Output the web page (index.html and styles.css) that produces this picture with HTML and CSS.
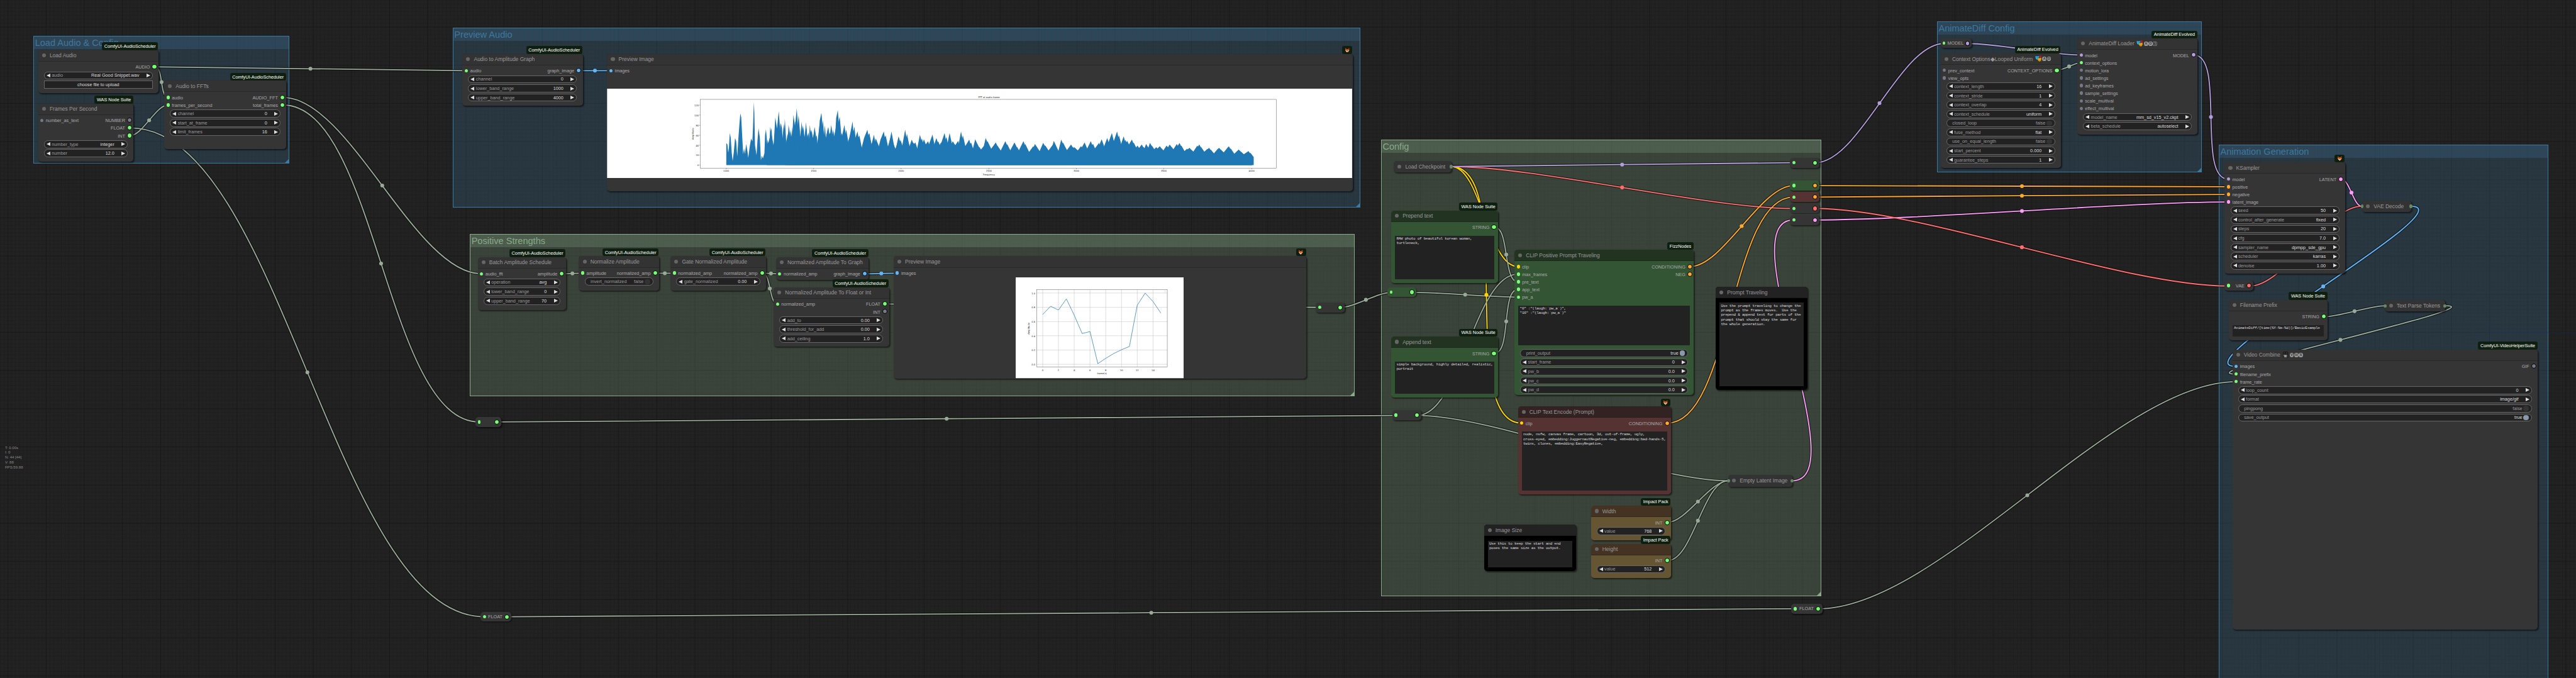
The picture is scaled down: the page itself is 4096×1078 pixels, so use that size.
FILE: index.html
```
<!DOCTYPE html>
<html lang="en">
<head>
<meta charset="utf-8">
<title>ComfyUI</title>
<link rel="stylesheet" href="styles.css">
</head>
<body>
<svg class="defs" aria-hidden="true">
  <symbol id="fox" viewBox="0 0 16 16">
    <path d="M2 0.5L6 4.5H10L14 0.5L14.5 8L8 15.5L1.5 8Z" fill="#e8590c"/>
    <path d="M2.8 2L5 4.8L3.2 6ZM13.2 2L11 4.8L12.8 6Z" fill="#5b2a16"/>
    <path d="M1.5 8L6.4 9.6L8 13.5L9.6 9.6L14.5 8L8 15.7Z" fill="#fff"/>
    <path d="M6.8 13.3H9.2L8 15.8ZM4.8 7.6H6.2V8.8H4.8ZM9.8 7.6H11.2V8.8H9.8Z" fill="#222"/>
  </symbol>
  <symbol id="masks" viewBox="0 0 18 18">
    <path d="M10 1.5L17 0.5V10L12 12Z" fill="#c0182b"/>
    <path d="M0.5 1Q5.500 3 11 1V8Q10 12.500 6 13Q1.500 12 0.500 7Z" fill="#29b6f6" stroke="#000" stroke-width=".6"/>
    <path d="M7 6.500Q11.500 8.500 17.300 6V12Q16.500 16.500 12.500 17.300Q8 16.500 7 12Z" fill="#fdb913" stroke="#000" stroke-width=".6"/>
    <path d="M3 5H5M7 5H9M9.500 10H11.300M13.500 10H15.300M10 13Q12.500 15.500 15 13" stroke="#222" stroke-width=".9" fill="none"/>
  </symbol>
  <symbol id="camera" viewBox="0 0 18 18">
    <circle cx="6" cy="4" r="3.500" fill="#333" stroke="#000"/><circle cx="12" cy="4" r="3.500" fill="#333" stroke="#000"/>
    <path d="M2 8H14V17H4V12H2Z" fill="#777" stroke="#000"/><path d="M14 9H17V15H14Z" fill="#555" stroke="#000"/>
    <path d="M6 11H11M6 14H11" stroke="#ddd"/><circle cx="13" cy="10" r="1" fill="#d33"/>
  </symbol>
</svg>

<main class="graph">
  <section class="group blue g-load"><h2>Load Audio &amp; Config</h2></section>
  <section class="group blue g-preview"><h2>Preview Audio</h2></section>
  <section class="group green g-strengths"><h2>Positive Strengths</h2></section>
  <section class="group green g-config"><h2>Config</h2></section>
  <section class="group blue g-animdiff"><h2>AnimateDiff Config</h2></section>
  <section class="group blue g-generation"><h2>Animation Generation</h2></section>

  <svg class="links" viewBox="0 0 6746 1775">
    <defs>
      <g id="wires">
        <path class="data" d="M406 175C610 175 1017 185 1221 185"/>
        <path class="data" d="M406 175C428 175 418 255 440 255"/>
        <path class="data" d="M341 355C373 355 408 275 440 275"/>
        <path class="data" d="M341 335C736 335 874 1615 1269 1615"/>
        <path class="data" d="M741 255C915 255 1087 717 1261 717"/>
        <path class="data" d="M741 275C985 275 1011 1105 1255 1105"/>
        <path class="data" d="M1303 1105C1889 1105 3069 1088 3655 1088"/>
        <path class="data" d="M1330 1615C2172 1615 3859 1594 4701 1594"/>
        <path class="data" d="M4763 1594C5077 1594 5541 999.500 5855 999.500"/>
        <path class="data" d="M1472 717C1485 717 1513 715.500 1526 715.500"/>
        <path class="data" d="M1717 715.500H1766"/>
        <path class="data" d="M1997 715.500C2008 715.500 2030 717 2041 717"/>
        <path class="data" d="M1997 715.500C2019 715.500 2014 796 2036 796"/>
        <path class="data" d="M2319 796C2603 796 3171 805 3455 805"/>
        <path class="data" d="M3511 805C3545 805 3609 765.500 3643 765.500"/>
        <path class="clip" d="M3800 436C3879 436 3896 698 3975 698"/>
        <path class="clip" d="M3800 436C3974 436 3811 1108 3985 1108"/>
        <path class="vae" d="M3800 436C4026 436 4471 546 4697 546"/>
        <path class="model" d="M3800 436C4024 436 4473 426 4697 426"/>
        <path class="data" d="M3699 765.500C3768 765.500 3906 778 3975 778"/>
        <path class="data" d="M3914 595C3953 595 3936 738 3975 738"/>
        <path class="data" d="M3914 925C3958 925 3931 758 3975 758"/>
        <path class="data" d="M3711 1088C3825 1088 3861 718 3975 718"/>
        <path class="data" d="M3711 1088C3919 1088 4318 1259 4526 1259"/>
        <path class="data" d="M4367 1368C4415 1368 4478 1259 4526 1259"/>
        <path class="data" d="M4367 1468C4433 1468 4460 1259 4526 1259"/>
        <path class="cond" d="M4426 698C4512 698 4611 486 4697 486"/>
        <path class="cond" d="M4366 1108C4535 1108 4528 516 4697 516"/>
        <path class="latent" d="M4693 1259C4864 1259 4526 576 4697 576"/>
        <path class="cond" d="M4754 486C5025 486 5565 489 5835 489"/>
        <path class="cond" d="M4754 516C5025 516 5565 509 5835 509"/>
        <path class="latent" d="M4754 576C5025 576 5565 529 5835 529"/>
        <path class="vae" d="M4754 546C5030 546 5559 749 5835 749"/>
        <path class="model" d="M4754 426C4869 426 4976 114 5091 114"/>
        <path class="model" d="M5155 114C5229 114 5375 144 5449 144"/>
        <path class="data" d="M5388 184C5404 184 5433 164 5449 164"/>
        <path class="model" d="M5745 144C5829 144 5751 469 5835 469"/>
        <path class="latent" d="M6131 469C6153 469 6163 540 6185 540"/>
        <path class="vae" d="M5892 749C5982 749 6095 540 6185 540"/>
        <path class="image" d="M6313 540C6468 540 5700 959.500 5855 959.500"/>
        <path class="data" d="M6086 829.500C6127 829.500 6205 800.500 6246 800.500"/>
        <path class="data" d="M6403 800.500C6547 800.500 5711 979.500 5855 979.500"/>
        <path class="image" d="M1516 185H1600"/>
        <path class="image" d="M2266 717C2287 717 2329 715.500 2350 715.500"/>
      </g>
    </defs>
    <use href="#wires" class="shade"/>
    <use href="#wires"/>
    <g class="data">
      <circle cx="813" cy="180" r="5"/><circle cx="423" cy="215" r="5"/><circle cx="390.500" cy="315" r="5"/><circle cx="805" cy="975" r="5"/>
      <circle cx="1001" cy="486" r="5"/><circle cx="998" cy="690" r="5"/><circle cx="2479" cy="1096.500" r="5"/><circle cx="3015" cy="1604.500" r="5"/>
      <circle cx="5309" cy="1297" r="5"/><circle cx="1499" cy="716" r="5"/><circle cx="1741" cy="715.500" r="5"/><circle cx="2019" cy="716" r="5"/>
      <circle cx="2016" cy="755.500" r="5"/><circle cx="3577" cy="785" r="5"/><circle cx="3837" cy="771.500" r="5"/><circle cx="3944.500" cy="666.500" r="5"/>
      <circle cx="3944.500" cy="841.500" r="5"/><circle cx="4446.500" cy="1313.500" r="5"/><circle cx="4446.500" cy="1363.500" r="5"/>
      <circle cx="5418.500" cy="174" r="5"/><circle cx="6166" cy="815" r="5"/><circle cx="6129" cy="890" r="5"/>
    </g>
    <g class="cond"><circle cx="4561" cy="592" r="5"/><circle cx="5295" cy="487.500" r="5"/><circle cx="5295" cy="512.500" r="5"/></g>
    <g class="clip"><circle cx="3892.500" cy="772" r="5"/></g>
    <g class="vae"><circle cx="4248" cy="491" r="5"/><circle cx="5295" cy="647.500" r="5"/></g>
    <g class="latent"><circle cx="5295" cy="552.500" r="5"/><circle cx="6158" cy="504.500" r="5"/></g>
    <g class="model"><circle cx="4248" cy="431" r="5"/><circle cx="4922" cy="270" r="5"/><circle cx="5790" cy="306.500" r="5"/></g>
    <g class="image"><circle cx="1558" cy="185" r="5"/><circle cx="2308" cy="716" r="5"/><circle cx="6084" cy="750" r="5"/></g>
    <path class="axis" d="M6746 871H6521V915"/>
  </svg>

  <article class="node n-load-audio"><em class="badge">ComfyUI-AudioScheduler</em><h3>Load Audio</h3>
    <div class="slots"><ul class="in"></ul><ul class="out"><li>AUDIO</li></ul></div>
    <div class="widgets"><div class="widget"><span>audio</span><b>Real Good Snippet.wav</b></div><div class="button">choose file to upload</div></div>
  </article>
  <article class="node n-fps"><em class="badge">WAS Node Suite</em><h3>Frames Per Second</h3>
    <div class="slots"><ul class="in"><li class="idle">number_as_text</li></ul><ul class="out"><li class="idle">NUMBER</li><li>FLOAT</li><li>INT</li></ul></div>
    <div class="widgets"><div class="widget"><span>number_type</span><b>integer</b></div><div class="widget"><span>number</span><b>12.0</b></div></div>
  </article>
  <article class="node n-fft"><em class="badge">ComfyUI-AudioScheduler</em><h3>Audio to FFTs</h3>
    <div class="slots"><ul class="in"><li>audio</li><li>frames_per_second</li></ul><ul class="out"><li>AUDIO_FFT</li><li>total_frames</li></ul></div>
    <div class="widgets"><div class="widget"><span>channel</span><b>0</b></div><div class="widget"><span>start_at_frame</span><b>0</b></div><div class="widget"><span>limit_frames</span><b>16</b></div></div>
  </article>

  <article class="node n-amp-graph"><em class="badge">ComfyUI-AudioScheduler</em><h3>Audio to Amplitude Graph</h3>
    <div class="slots"><ul class="in"><li>audio</li></ul><ul class="out"><li class="image">graph_image</li></ul></div>
    <div class="widgets"><div class="widget"><span>channel</span><b>0</b></div><div class="widget"><span>lower_band_range</span><b>1000</b></div><div class="widget"><span>upper_band_range</span><b>4000</b></div></div>
  </article>
  <article class="node n-preview-audio"><em class="badge"><svg class="fox"><use href="#fox"/></svg></em><h3>Preview Image</h3>
    <div class="slots"><ul class="in"><li class="image">images</li></ul></div>
    <svg class="plot wide" viewBox="0 0 1951 234">
      <rect width="1951" height="234" fill="#fff"/>
      <path class="area" transform="translate(-430 -182.300) scale(.574 .3333)" d="M1293 1147V975L1298 985L1302 1050L1305 1010L1309 895L1313 930L1318 1055L1322 1115L1327 1050L1333 935L1338 960L1343 1080L1348 940L1353 825L1357 742L1361 770L1365 900L1370 1062L1374 1015L1378 1060L1384 980L1390 1045L1393 1090L1400 1000L1406 940L1412 960L1415 850L1417 730L1419 655L1421 740L1424 990L1431 1070L1435 960L1440 858L1446 930L1451 1110L1455 1075L1460 1095L1467 1055L1470 910L1474 866L1480 985L1486 965L1492 925L1499 855L1505 1010L1511 970L1517 990L1522 905L1527 1000L1533 990L1539 840L1542 818L1547 860L1552 1000L1556 920L1560 783L1565 920L1568 1147Z"/>
      <g id="spectrum"><path class="area" transform="translate(-1590 -232.300) scale(4.3023)" d="M478 100.500L478.400 84L479.500 90L480 76L481 82L482 88L483 70L484 77L485 66L486 80L487 85L488 74L489 88L490 82L491 78L492 90L493 76L494 86L496 80L497 92L499 75L500 84L501 73L502 88L504 78L505 84L506 76L508 90L509 72L510 67L511 80L512 86L514 76L516 90L517 84L519 74L520 86L522 80L524 92L526 84L528 79L530 90L532 82L534 93L536 85L538 80L540 91L542 84L545 92L547 83L549 90L551 79L553 91L555 85L558 92L560 82L562 90L565 86L567 93L570 84L572 90L575 81L577 92L580 86L583 91L585 80L587 90L590 85L592 92L595 88L598 93L600 84L603 91L606 87L609 92L612 86L615 93L618 88L620 92L623 86L626 93L629 89L632 94L635 87L638 92L641 88L644 93L646 85L649 92L652 88L655 93L658 89L661 92L664 86L666 91L669 87L671 92L674 84L676 90L678 86L680 80L682 89L684 83L686 90L689 85L692 92L695 88L698 93L700 87L703 92L706 89L709 93L712 88L715 92L718 87L721 93L724 90L727 93L730 88L733 93L736 90L739 94L742 90L745 93L748 89L751 94L754 91L757 94L760 92L762 95V100.500Z"/></g>
      <use href="#spectrum" transform="translate(5 24) scale(1 .88)"/>
      <use href="#spectrum" transform="translate(-67 10) scale(1.04 .95)"/>
      <rect class="frame" x="244" y="28" width="1509" height="180"/>
      <path class="frame" d="M312 208v3M541 208v3M770 208v3M1000 208v3M1229 208v3M1458 208v3M1688 208v3M244 200h-3M244 174h-3M244 148h-3M244 122h-3M244 96h-3M244 69h-3M244 43h-3"/>
      <g class="ticks mid"><text x="312" y="218">1000</text><text x="541" y="218">1500</text><text x="770" y="218">2000</text><text x="1000" y="218">2500</text><text x="1229" y="218">3000</text><text x="1458" y="218">3500</text><text x="1688" y="218">4000</text><text x="1000" y="227">Frequency</text><text x="1000" y="25">FFT of audio frame</text></g>
      <g class="ticks end"><text x="240" y="203">0</text><text x="240" y="177">20</text><text x="240" y="151">40</text><text x="240" y="125">60</text><text x="240" y="99">80</text><text x="240" y="72">100</text><text x="240" y="46">120</text></g>
      <text class="ticks mid" transform="translate(227 118) rotate(-90)">Amplitude</text>
    </svg>
  </article>

  <article class="node n-batch"><em class="badge">ComfyUI-AudioScheduler</em><h3>Batch Amplitude Schedule</h3>
    <div class="slots"><ul class="in"><li>audio_fft</li></ul><ul class="out"><li>amplitude</li></ul></div>
    <div class="widgets"><div class="widget"><span>operation</span><b>avg</b></div><div class="widget"><span>lower_band_range</span><b>0</b></div><div class="widget"><span>upper_band_range</span><b>70</b></div></div>
  </article>
  <article class="node n-normalize"><em class="badge">ComfyUI-AudioScheduler</em><h3>Normalize Amplitude</h3>
    <div class="slots"><ul class="in"><li>amplitude</li></ul><ul class="out"><li>normalized_amp</li></ul></div>
    <div class="widgets"><div class="toggle"><span>invert_normalized</span><b>false</b></div></div>
  </article>
  <article class="node n-gate"><em class="badge">ComfyUI-AudioScheduler</em><h3>Gate Normalized Amplitude</h3>
    <div class="slots"><ul class="in"><li>normalized_amp</li></ul><ul class="out"><li>normalized_amp</li></ul></div>
    <div class="widgets"><div class="widget"><span>gate_normalized</span><b>0.00</b></div></div>
  </article>
  <article class="node n-to-graph"><em class="badge">ComfyUI-AudioScheduler</em><h3>Normalized Amplitude To Graph</h3>
    <div class="slots"><ul class="in"><li>normalized_amp</li></ul><ul class="out"><li class="image">graph_image</li></ul></div>
  </article>
  <article class="node n-to-float"><em class="badge">ComfyUI-AudioScheduler</em><h3>Normalized Amplitude To Float or Int</h3>
    <div class="slots"><ul class="in"><li>normalized_amp</li></ul><ul class="out"><li>FLOAT</li><li class="idle">INT</li></ul></div>
    <div class="widgets"><div class="widget"><span>add_to</span><b>0.00</b></div><div class="widget"><span>threshold_for_add</span><b>0.00</b></div><div class="widget"><span>add_ceiling</span><b>1.0</b></div></div>
  </article>
  <article class="node n-preview-amp"><em class="badge"><svg class="fox"><use href="#fox"/></svg></em><h3>Preview Image</h3>
    <div class="slots"><ul class="in"><li class="image">images</li></ul></div>
    <svg class="plot small" viewBox="0 0 440 264">
      <rect width="440" height="264" fill="#fff"/>
      <path class="gridline" d="M70.800 32V235M112 32V235M153.300 32V235M194.600 32V235M235.900 32V235M277.200 32V235M318.400 32V235M359.700 32V235M55 41H397M55 78.500H397M55 116H397M55 153H397M55 190.500H397M55 227.600H397"/>
      <path class="line" d="M70.800 97L91.400 75.700L112 85.500L132.700 56.500L153.300 99L174 147L194.600 142L215.200 226L235.900 212L256.500 199.600L277.200 189.500L297.800 181L318.400 73L339.100 41.200L359.700 63.600L380.300 93.500"/>
      <rect class="frame" x="55" y="32" width="342" height="203"/>
      <rect x="389" y="35" width="4" height="6" fill="none" stroke="#ddd" stroke-width=".7"/>
      <g class="ticks mid"><text x="70.800" y="245">0</text><text x="112" y="245">2</text><text x="153.300" y="245">4</text><text x="194.600" y="245">6</text><text x="235.900" y="245">8</text><text x="277.200" y="245">10</text><text x="318.400" y="245">12</text><text x="359.700" y="245">14</text><text x="226" y="254">frame(s)</text></g>
      <g class="ticks end"><text x="51" y="44">1.0</text><text x="51" y="81.500">0.8</text><text x="51" y="119">0.6</text><text x="51" y="156">0.4</text><text x="51" y="193.500">0.2</text><text x="51" y="230.600">0.0</text></g>
      <text class="ticks mid" transform="translate(37 134) rotate(-90)">Amplitude</text>
    </svg>
  </article>

  <div class="reroute r-strength"></div>
  <div class="reroute r-frames"></div>
  <div class="reroute wide-label r-float-left">FLOAT</div>
  <div class="reroute wide-label r-float-right">FLOAT</div>
  <div class="reroute tint-green r-pw"></div>
  <div class="reroute r-max"></div>
  <div class="reroute r-model"></div>
  <div class="reroute tint-green cond r-positive"></div>
  <div class="reroute tint-red cond r-negative"></div>
  <div class="reroute vae r-vae"></div>
  <div class="reroute latent r-latent"></div>
  <div class="reroute wide-label model r-ad-model">MODEL</div>
  <div class="reroute wide-label vae r-vae-in">VAE</div>

  <article class="node collapsed n-checkpoint"><h3>Load Checkpoint</h3></article>
  <article class="node tint-green n-prepend"><em class="badge">WAS Node Suite</em><h3>Prepend text</h3>
    <div class="slots"><ul class="in"></ul><ul class="out"><li>STRING</li></ul></div>
    <p class="text">RAW photo of beautiful korean woman,
turtleneck,</p>
  </article>
  <article class="node tint-green n-append"><em class="badge">WAS Node Suite</em><h3>Append text</h3>
    <div class="slots"><ul class="in"></ul><ul class="out"><li>STRING</li></ul></div>
    <p class="text">simple background, highly detailed, realistic,
portrait</p>
  </article>
  <article class="node tint-green n-travel"><em class="badge">FizzNodes</em><h3>CLIP Positive Prompt Traveling</h3>
    <div class="slots"><ul class="in"><li class="clip">clip</li><li>max_frames</li><li>pre_text</li><li>app_text</li><li>pw_a</li></ul><ul class="out"><li class="cond">CONDITIONING</li><li class="cond">NEG</li></ul></div>
    <p class="text">"0" :"(laugh:`pw_a`)",
"16" :"(laugh:`pw_a`)"</p>
    <div class="widgets"><div class="toggle on"><span>print_output</span><b>true</b></div><div class="widget"><span>start_frame</span><b>0</b></div><div class="widget"><span>pw_b</span><b>0.0</b></div><div class="widget"><span>pw_c</span><b>0.0</b></div><div class="widget"><span>pw_d</span><b>0.0</b></div></div>
  </article>
  <article class="node note n-note-travel"><h3>Prompt Traveling</h3>
    <p class="text">Use the prompt traveling to change the
prompt as the frames moves.  Use the
prepend &amp; append text for parts of the
prompt that should stay the same for
the whole generation.</p>
  </article>
  <article class="node tint-red n-encode"><em class="badge"><svg class="fox"><use href="#fox"/></svg></em><h3>CLIP Text Encode (Prompt)</h3>
    <div class="slots"><ul class="in"><li class="clip">clip</li></ul><ul class="out"><li class="cond">CONDITIONING</li></ul></div>
    <p class="text">nude, nsfw, canvas frame, cartoon, 3d, out-of-frame, ugly,
cross-eyed, embedding:JuggernautNegative-neg, embedding:bad-hands-5,
twins, clones, embedding:EasyNegative,</p>
  </article>
  <article class="node tint-brown n-width"><em class="badge">Impact Pack</em><h3>Width</h3>
    <div class="slots"><ul class="in"></ul><ul class="out"><li>INT</li></ul></div>
    <div class="widgets"><div class="widget"><span>value</span><b>768</b></div></div>
  </article>
  <article class="node tint-brown n-height"><em class="badge">Impact Pack</em><h3>Height</h3>
    <div class="slots"><ul class="in"></ul><ul class="out"><li>INT</li></ul></div>
    <div class="widgets"><div class="widget"><span>value</span><b>512</b></div></div>
  </article>
  <article class="node note n-note-size"><h3>Image Size</h3>
    <p class="text">Use this to keep the start and end
poses the same size as the output.</p>
  </article>
  <article class="node collapsed both n-latent"><h3>Empty Latent Image</h3></article>

  <article class="node n-context"><em class="badge">AnimateDiff Evolved</em><h3>Context Options◆Looped Uniform <svg class="emoji"><use href="#masks"/></svg><i>A</i><i>D</i></h3>
    <div class="slots"><ul class="in"><li class="idle">prev_context</li><li class="idle">view_opts</li></ul><ul class="out"><li>CONTEXT_OPTIONS</li></ul></div>
    <div class="widgets"><div class="widget"><span>context_length</span><b>16</b></div><div class="widget"><span>context_stride</span><b>1</b></div><div class="widget"><span>context_overlap</span><b>4</b></div><div class="widget"><span>context_schedule</span><b>uniform</b></div><div class="toggle"><span>closed_loop</span><b>false</b></div><div class="widget"><span>fuse_method</span><b>flat</b></div><div class="toggle"><span>use_on_equal_length</span><b>false</b></div><div class="widget"><span>start_percent</span><b>0.000</b></div><div class="widget"><span>guarantee_steps</span><b>1</b></div></div>
  </article>
  <article class="node n-loader"><em class="badge">AnimateDiff Evolved</em><h3>AnimateDiff Loader <svg class="emoji"><use href="#masks"/></svg><i>A</i><i>D</i><i class="hollow">1</i></h3>
    <div class="slots"><ul class="in"><li class="model">model</li><li>context_options</li><li class="idle">motion_lora</li><li class="idle">ad_settings</li><li class="idle">ad_keyframes</li><li class="idle">sample_settings</li><li class="idle">scale_multival</li><li class="idle">effect_multival</li></ul><ul class="out"><li class="model">MODEL</li></ul></div>
    <div class="widgets"><div class="widget"><span>model_name</span><b>mm_sd_v15_v2.ckpt</b></div><div class="widget"><span>beta_schedule</span><b>autoselect</b></div></div>
  </article>

  <article class="node n-ksampler"><em class="badge"><svg class="fox"><use href="#fox"/></svg></em><h3>KSampler</h3>
    <div class="slots"><ul class="in"><li class="model">model</li><li class="cond">positive</li><li class="cond">negative</li><li class="latent">latent_image</li></ul><ul class="out"><li class="latent">LATENT</li></ul></div>
    <div class="widgets"><div class="widget"><span>seed</span><b>50</b></div><div class="widget"><span>control_after_generate</span><b>fixed</b></div><div class="widget"><span>steps</span><b>20</b></div><div class="widget"><span>cfg</span><b>7.0</b></div><div class="widget"><span>sampler_name</span><b>dpmpp_sde_gpu</b></div><div class="widget"><span>scheduler</span><b>karras</b></div><div class="widget"><span>denoise</span><b>1.00</b></div></div>
  </article>
  <article class="node collapsed both n-decode"><h3>VAE Decode</h3></article>
  <article class="node n-prefix"><em class="badge">WAS Node Suite</em><h3>Filename Prefix</h3>
    <div class="slots"><ul class="in"></ul><ul class="out"><li>STRING</li></ul></div>
    <p class="text">AnimateDiff/[time(%Y-%m-%d)]/BasicExample</p>
  </article>
  <article class="node collapsed both n-tokens"><h3>Text Parse Tokens</h3></article>
  <article class="node n-video"><em class="badge">ComfyUI-VideoHelperSuite</em><h3>Video Combine <svg class="emoji"><use href="#camera"/></svg><i>V</i><i>H</i><i>S</i></h3>
    <div class="slots"><ul class="in"><li class="image">images</li><li>filename_prefix</li><li>frame_rate</li></ul><ul class="out"><li class="idle">GIF</li></ul></div>
    <div class="widgets"><div class="widget"><span>loop_count</span><b>0</b></div><div class="widget"><span>format</span><b>image/gif</b></div><div class="toggle"><span>pingpong</span><b>false</b></div><div class="toggle on"><span>save_output</span><b>true</b></div></div>
  </article>

  <pre class="stats">T: 0.00s
I: 0
N: 44 [44]
V: 88
FPS:59.88</pre>
</main>
</body>
</html>
```
FILE: styles.css
```
* { box-sizing: border-box; }

html, body {
  margin: 0;
  width: 100%;
  height: 100%;
  overflow: hidden;
  background: #222;
}

ul, h2, h3, p, pre { margin: 0; padding: 0; font-weight: normal; }
ul { list-style: none; }
.defs { position: absolute; width: 0; height: 0; }

/* canvas: world units are pixels, the whole view is zoomed out */
.graph {
  position: relative;
  width: 6745px;
  height: 1775px;
  overflow: hidden;
  zoom: .60718;
  font: 12px "Liberation Sans", Arial, sans-serif;
  color: #aaa;
  background-color: #222;
  background-image:
    linear-gradient(#191919 2px, transparent 2px),
    linear-gradient(90deg, #191919 2px, transparent 2px),
    linear-gradient(#1e1e1e 1px, transparent 1px),
    linear-gradient(90deg, #1e1e1e 1px, transparent 1px);
  background-size: 100px 100px, 100px 100px, 10px 10px, 10px 10px;
  background-position: 0 70px, 20px 0, 0 0, 0 0;
}

/* socket and wire colours */
.graph, .data { --c: #9a9; --dot: #7f7; }
.idle { --dot: #778; }
.image { --c: #64b5f6; --dot: #64b5f6; }
.clip { --c: #ffd500; --dot: #ffd500; }
.cond { --c: #ffa931; --dot: #ffa931; }
.latent { --c: #ff9cf9; --dot: #ff9cf9; }
.model { --c: #b39ddb; --dot: #b39ddb; }
.vae { --c: #ff6e6e; --dot: #ff6e6e; }

/* groups */
.group {
  position: absolute;
  border: 1px solid var(--g);
  color: var(--g);
}
.group.blue { --g: #3f789e; --fill: rgba(63, 120, 158, .25); }
.group.green { --g: #8a8; --fill: rgba(136, 170, 136, .25); }
.group { background: var(--fill); }
.group h2 {
  height: 33px;
  padding: 3px 0 0 3px;
  background: var(--fill);
  font-size: 24px;
  line-height: 27px;
}
.group::after {
  content: "";
  position: absolute;
  right: 0;
  bottom: 0;
  border: 5px solid var(--g);
  border-top-color: transparent;
  border-left-color: transparent;
}
.g-load { left: 87px; top: 94px; width: 671px; height: 335px; }
.g-preview { left: 1185px; top: 72px; width: 2378px; height: 471px; }
.g-strengths { left: 1230px; top: 613px; width: 2318px; height: 425px; }
.g-config { left: 3616px; top: 366px; width: 1153px; height: 1195px; }
.g-animdiff { left: 5072px; top: 56px; width: 694px; height: 395px; }
.g-generation { left: 5810px; top: 379px; width: 863px; height: 1396px; border-bottom: 0; }
.g-generation::after { display: none; }

/* wires */
.links { position: absolute; left: 0; top: 0; width: 6746px; height: 1775px; }
.links path { fill: none; stroke: var(--shade, var(--c)); stroke-width: var(--w, 3px); }
.links circle { fill: var(--c); }
.links .shade { --shade: rgba(0, 0, 0, .5); --w: 7px; }
.links .axis { stroke: rgba(35, 60, 110, .7); stroke-width: 1px; }

/* nodes */
.node {
  --head: #333;
  --body: #353535;
  position: absolute;
  display: flex;
  flex-direction: column;
  border-radius: 8px;
  background: var(--body);
  box-shadow: 2px 2px 3px rgba(0, 0, 0, .5);
}
.tint-green { --head: #232; --body: #353; }
.tint-red { --head: #322; --body: #533; }
.tint-brown { --head: #432; --body: #653; }
.note { --head: #222; --body: #000; }

.node h3 {
  display: flex;
  flex: none;
  align-items: center;
  height: 30px;
  padding-left: 10px;
  border-radius: 8px 8px 0 0;
  border-bottom: 1px solid rgba(0, 0, 0, .2);
  background: var(--head);
  color: #999;
  font-size: 14px;
  white-space: pre;
}
.node h3::before {
  content: "";
  width: 10px;
  height: 10px;
  margin-right: 10px;
  border-radius: 50%;
  background: #666;
}
.node h3 i {
  width: 11px;
  height: 11px;
  margin-left: 1px;
  border-radius: 50%;
  background: #999;
  color: #333;
  font: bold 9px/11px "Liberation Sans", Arial, sans-serif;
  text-align: center;
}
.node h3 i.hollow { background: none; color: #999; box-shadow: inset 0 0 0 1px #999; }
.emoji { width: 17px; height: 17px; margin: 0 1px 0 2px; }

.badge {
  position: absolute;
  right: 1px;
  top: -20px;
  display: flex;
  align-items: center;
  height: 20px;
  padding: 0 6px;
  border-radius: 5px;
  background: #0f1f0f;
  color: #fff;
  font-style: normal;
  white-space: nowrap;
}
.fox { width: 14px; height: 13px; }

.slots { display: flex; flex: none; justify-content: space-between; padding-top: 4px; }
.slots li {
  display: flex;
  align-items: center;
  height: 20px;
  padding: 2px 6px 0;
  gap: 6px;
}
.slots li::before {
  content: "";
  width: 8px;
  height: 9px;
  margin-top: -2px;
  border-radius: 50%;
  background: var(--dot);
}
.out li { flex-direction: row-reverse; padding-right: 4px; gap: 5px; }
.out li::before { width: 10px; height: 10px; border: 1px solid #000; }

.widgets { display: flex; flex-direction: column; gap: 4px; margin: 2px 15px 0; }
.widget, .toggle, .button {
  display: flex;
  align-items: center;
  height: 21px;
  margin-bottom: -1px;
  border: 1px solid #666;
  background: #222;
  color: #999;
}
.widget, .toggle { border-radius: 10.5px; padding: 0 5px; }
.widget span, .toggle span { flex: 1; }
.widget b, .toggle b, .button { font-weight: normal; color: #ddd; }
.widget::before, .widget::after {
  content: "";
  border: 5px solid transparent;
  border-right: 10px solid #ddd;
  border-left: 0;
  margin-right: 4px;
}
.widget::after {
  border-left: 10px solid #ddd;
  border-right: 0;
  margin: 0 0 0 19px;
}
.toggle { padding: 0 7px 0 14px; }
.toggle b { color: #999; }
.toggle::after {
  content: "";
  width: 14px;
  height: 14px;
  margin-left: 3px;
  border-radius: 50%;
  background: #333;
}
.toggle.on b { color: #ddd; }
.toggle.on::after { background: #89a; }
.button { justify-content: center; }

.text {
  flex: 1;
  margin: 12px 10px 10px;
  padding: 2px 4px;
  background: #222;
  color: #ddd;
  font: 10px/12px "Liberation Mono", monospace;
  letter-spacing: -.5px;
  white-space: pre;
}
.n-travel .widgets { margin: 0 15px 4px; }

.collapsed { height: 30px; }
.collapsed h3 { border: 0; border-radius: 8px; }
.collapsed::after, .collapsed.both::before {
  content: "";
  position: absolute;
  right: -3px;
  top: 11px;
  width: 8px;
  height: 9px;
  border-radius: 40%;
  background: #686;
}
.collapsed.both::before { left: -4px; right: auto; }

/* reroutes */
.reroute {
  --body: #353535;
  position: absolute;
  display: flex;
  align-items: center;
  justify-content: space-between;
  width: 76px;
  height: 26px;
  padding: 0 5px 0 6px;
  border-radius: 8px;
  background: var(--body);
  box-shadow: 2px 2px 3px rgba(0, 0, 0, .5);
}
.reroute.tint-green { --body: #353; }
.reroute.tint-red { --body: #533; }
.reroute::before, .reroute::after {
  content: "";
  width: 8px;
  height: 9px;
  border-radius: 50%;
  background: #7f7;
}
.reroute::after { width: 10px; height: 10px; border: 1px solid #000; background: var(--dot); }
.wide-label { width: 82px; gap: 5px; }
.wide-label::before { margin-right: auto; }

.r-strength { left: 3446px; top: 792px; }
.r-frames { left: 1245px; top: 1092px; width: 68px; }
.r-float-left { left: 1259px; top: 1602px; width: 80px; }
.r-float-right { left: 4691px; top: 1581px; }
.r-pw { left: 3633px; top: 752px; }
.r-max { left: 3646px; top: 1074px; }
.r-model { left: 4688px; top: 413px; }
.r-positive { left: 4688px; top: 473px; }
.r-negative { left: 4688px; top: 503px; }
.r-vae { left: 4688px; top: 533px; }
.r-latent { left: 4688px; top: 563px; }
.r-ad-model { left: 5082px; top: 100px; }
.r-vae-in { left: 5826px; top: 735px; width: 75px; }

/* node placement */
.n-load-audio { left: 100px; top: 131px; width: 315px; height: 112px; }
.n-fps { left: 100px; top: 271px; width: 250px; height: 152px; }
.n-fft { left: 430px; top: 211px; width: 320px; height: 180px; }
.n-amp-graph { left: 1211px; top: 141px; width: 315px; height: 136px; }
.n-preview-audio { left: 1590px; top: 141px; width: 1952px; height: 360px; }
.n-batch { left: 1251px; top: 673px; width: 231px; height: 139px; }
.n-normalize { left: 1516px; top: 671px; width: 210px; height: 90px; }
.n-gate { left: 1756px; top: 671px; width: 250px; height: 90px; }
.n-to-graph { left: 2032px; top: 673px; width: 243px; height: 60px; }
.n-to-float { left: 2026px; top: 752px; width: 302px; height: 155px; }
.n-preview-amp { left: 2340px; top: 671px; width: 1081px; height: 320px; }
.n-checkpoint { left: 3650px; top: 421px; width: 152px; }
.n-prepend { left: 3643px; top: 551px; width: 280px; height: 190px; }
.n-append { left: 3643px; top: 881px; width: 280px; height: 160px; }
.n-travel { left: 3966px; top: 654px; width: 470px; height: 380px; }
.n-note-travel { left: 4493px; top: 751px; width: 240px; height: 270px; }
.n-encode { left: 3975px; top: 1064px; width: 401px; height: 230px; }
.n-width { left: 4166px; top: 1324px; width: 210px; height: 90px; }
.n-height { left: 4166px; top: 1424px; width: 210px; height: 90px; }
.n-note-size { left: 3886px; top: 1374px; width: 242px; height: 121px; }
.n-latent { left: 4526px; top: 1244px; width: 168px; }
.n-context { left: 5082px; top: 140px; width: 315px; height: 300px; }
.n-loader { left: 5440px; top: 100px; width: 315px; height: 252px; }
.n-ksampler { left: 5826px; top: 425px; width: 315px; height: 292px; }
.n-decode { left: 6186px; top: 525px; width: 128px; }
.n-prefix { left: 5836px; top: 785px; width: 260px; height: 106px; }
.n-tokens { left: 6246px; top: 786px; width: 158px; }
.n-video { left: 5846px; top: 915px; width: 800px; height: 733px; }

/* image previews */
.plot { display: block; flex: none; }
.plot.wide { width: 100%; height: 234px; margin-top: 37px; }
.plot.small { width: 440px; height: 264px; margin: 2px 0 0 320px; }
.area { fill: #1f77b4; }
.frame { fill: none; stroke: #555; stroke-width: .8; }
.gridline { fill: none; stroke: #bbb; stroke-width: .8; }
.line { fill: none; stroke: #1f77b4; stroke-width: 1.2; }
.ticks { font: 6px "DejaVu Sans", sans-serif; fill: #222; }
.mid { text-anchor: middle; }
.end { text-anchor: end; }

.stats {
  position: absolute;
  left: 13px;
  top: 1167px;
  color: #888;
  font: 10px/13px "Liberation Sans", Arial, sans-serif;
}
```
